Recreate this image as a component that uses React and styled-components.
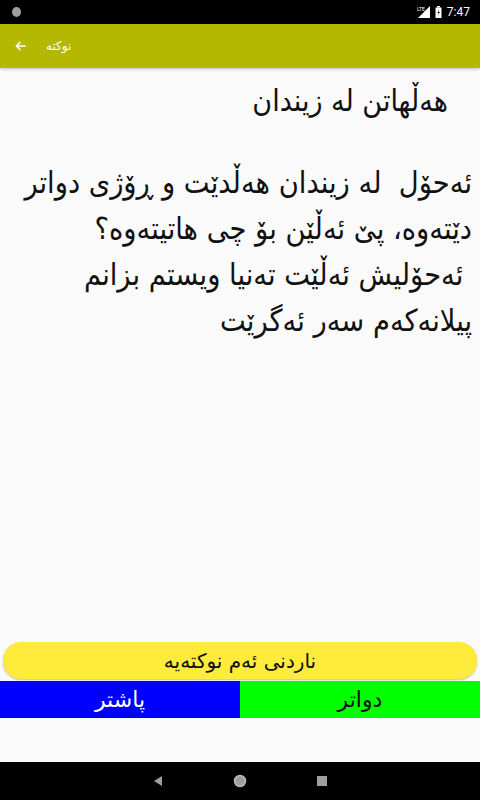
import React from "react";
import styled, { createGlobalStyle } from "styled-components";

const Global = createGlobalStyle`
  html, body { margin: 0; padding: 0; }
  body { background: #fafafa; font-family: "DejaVu Sans", "Noto Sans", sans-serif; }
`;

const Screen = styled.div`
  width: 480px;
  height: 800px;
  display: flex;
  flex-direction: column;
  background: #fafafa;
  overflow: hidden;
`;

const StatusBar = styled.div`
  height: 24px;
  background: #000;
  display: flex;
  align-items: center;
  justify-content: space-between;
  padding: 0 10px 0 12px;
  color: #fff;
  font-family: "Roboto", sans-serif;
  font-size: 12px;
`;

const StatusRight = styled.div`
  display: flex;
  align-items: center;
  gap: 5px;
`;

const Dot = styled.div`
  width: 9px;
  height: 10px;
  border-radius: 50%;
  background: #9e9e9e;
`;

const AppBar = styled.div`
  height: 44px;
  background: #b5b800;
  display: flex;
  align-items: center;
  padding-left: 14px;
  gap: 18px;
  color: #fff;
  box-shadow: 0 1px 3px rgba(0,0,0,0.25);
  position: relative;
  z-index: 1;
`;

const AppTitle = styled.div`
  font-size: 12px;
  direction: rtl;
`;

const Content = styled.div`
  flex: 1;
  direction: rtl;
  display: flex;
  flex-direction: column;
`;

const Title = styled.div`
  font-family: "DejaVu Sans Condensed", "DejaVu Sans", sans-serif;
  font-size: 30px;
  color: #111;
  padding: 13px 32px 0 0;
  line-height: 40px;
`;

const Body = styled.div`
  font-family: "DejaVu Sans Condensed", "DejaVu Sans", sans-serif;
  font-size: 30.4px;
  color: #111;
  padding: 39px 8px 0 0;
  line-height: 46px;
  white-space: pre;
`;

const Spacer = styled.div`
  flex: 1;
`;

const SendButton = styled.div`
  margin: 0 3px 2px;
  height: 37px;
  border-radius: 18px;
  background: #ffeb3b;
  box-shadow: 0 1px 2px rgba(0,0,0,0.25);
  display: flex;
  align-items: center;
  justify-content: center;
  font-size: 20px;
  color: #111;
`;

const NavRow = styled.div`
  display: flex;
  direction: ltr;
  height: 37px;
  margin-bottom: 44px;
`;

const NavButton = styled.div`
  flex: 1;
  background: ${(p) => p.$bg};
  color: ${(p) => p.$fg};
  display: flex;
  align-items: center;
  justify-content: center;
  font-size: 22px;
  direction: rtl;
`;

const SysNav = styled.div`
  height: 38px;
  background: #000;
  display: flex;
  align-items: center;
  justify-content: center;
  gap: 70px;
`;

const lines = [
  "ئەحۆل  لە زیندان هەڵدێت و ڕۆژی دواتر",
  "دێتەوە، پێ ئەڵێن بۆ چی هاتیتەوە؟",
  " ئەحۆلیش ئەڵێت تەنیا ویستم بزانم",
  "پیلانەکەم سەر ئەگرێت",
];

export default function App() {
  return (
    <Screen>
      <Global />
      <StatusBar>
        <Dot />
        <StatusRight>
          <svg width="14" height="12" viewBox="0 0 14 12">
            <polygon points="14,0 14,12 2,12" fill="#fff" />
            <text x="1" y="5" fontSize="5" fill="#fff">LTE</text>
          </svg>
          <svg width="7" height="12" viewBox="0 0 7 12">
            <rect x="2" y="0" width="3" height="1.5" fill="#fff" />
            <rect x="0.5" y="1.5" width="6" height="10.5" fill="#fff" />
            <path d="M4 3 L2.5 7 L3.8 7 L3 10 L4.8 6 L3.5 6 Z" fill="#000" />
          </svg>
          <span>7:47</span>
        </StatusRight>
      </StatusBar>
      <AppBar>
        <svg width="14" height="14" viewBox="0 0 24 24" fill="none" stroke="#fff" strokeWidth="2.5">
          <path d="M20 12H4M11 5l-7 7 7 7" />
        </svg>
        <AppTitle>نوکتە</AppTitle>
      </AppBar>
      <Content>
        <Title>هەڵهاتن لە زیندان</Title>
        <Body>{lines.join("\n")}</Body>
        <Spacer />
        <SendButton>ناردنی ئەم نوکتەیە</SendButton>
        <NavRow>
          <NavButton $bg="#0000ff" $fg="#fff">پاشتر</NavButton>
          <NavButton $bg="#00ff00" $fg="#111">دواتر</NavButton>
        </NavRow>
      </Content>
      <SysNav>
        <svg width="10" height="12" viewBox="0 0 10 12"><polygon points="9,1 9,11 1,6" fill="#9e9e9e" /></svg>
        <svg width="14" height="14" viewBox="0 0 14 14"><circle cx="7" cy="7" r="5.5" fill="#9e9e9e" stroke="#bdbdbd" strokeWidth="1.5" /></svg>
        <svg width="10" height="10" viewBox="0 0 10 10"><rect width="10" height="10" fill="#9e9e9e" /></svg>
      </SysNav>
    </Screen>
  );
}
